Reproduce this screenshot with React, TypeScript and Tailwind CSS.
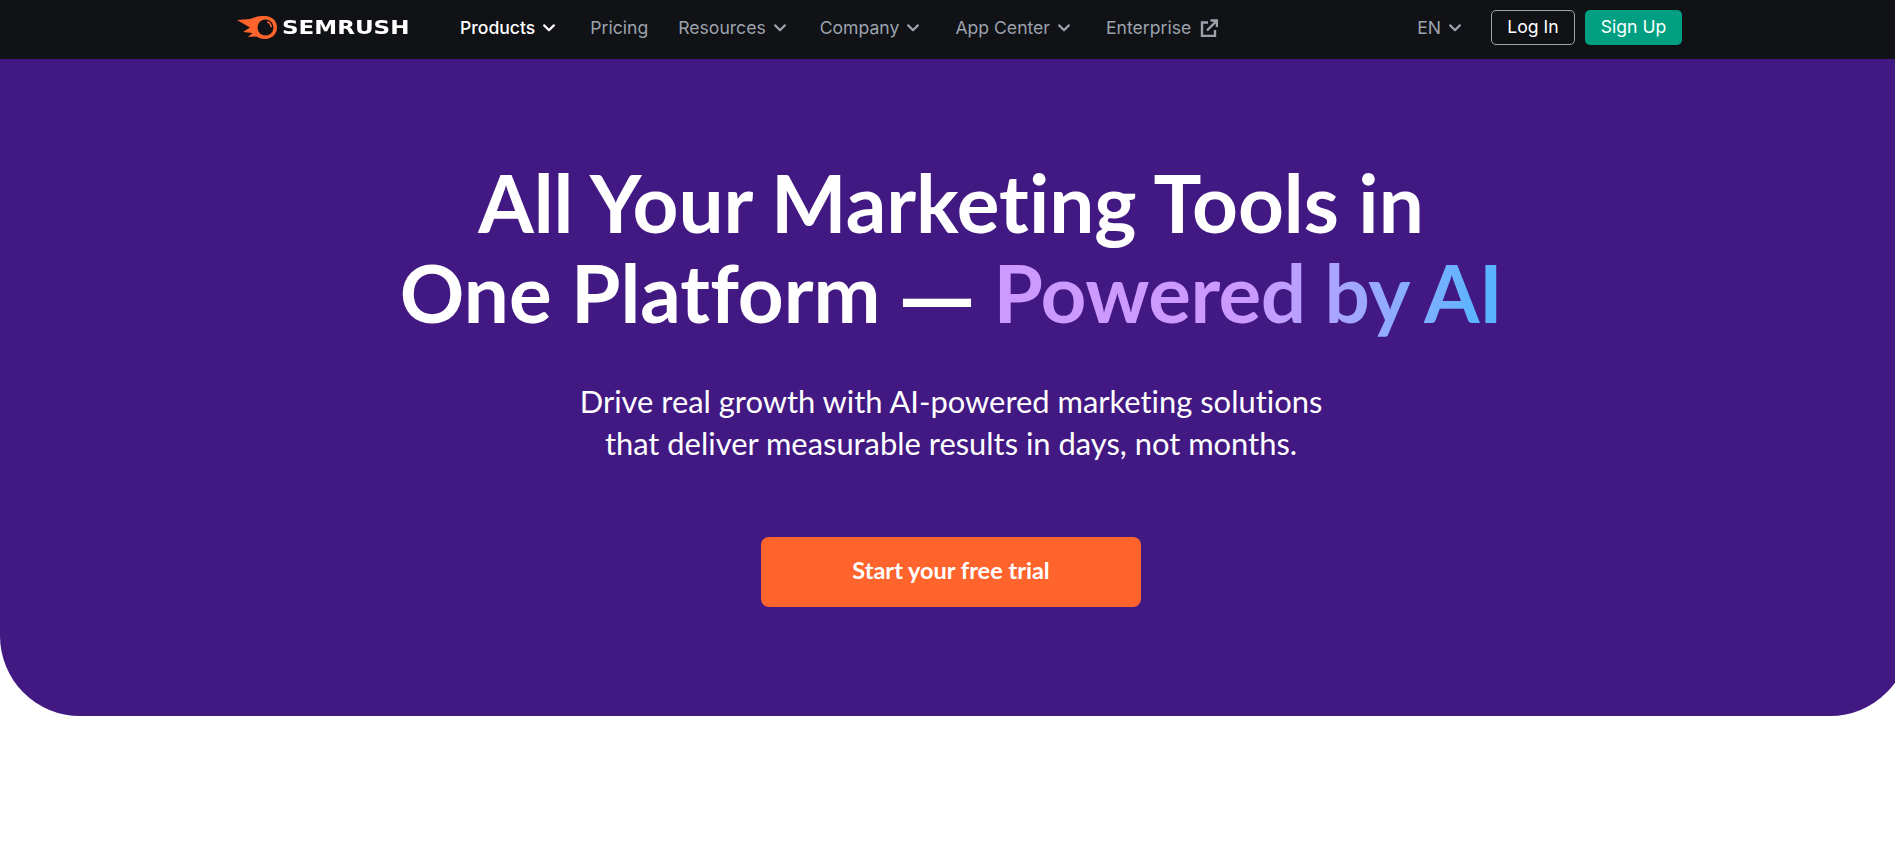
import React from "react";

const Chevron = ({ className = "" }: { className?: string }) => (
  <svg width="12" height="8" viewBox="0 0 12 8" fill="none" className={className}>
    <path d="M1.2 1.4 6 6.2l4.8-4.8" stroke="currentColor" strokeWidth="2.2" strokeLinecap="round" strokeLinejoin="round" />
  </svg>
);

const External = () => (
  <svg width="18" height="18" viewBox="0 0 18 18" fill="none" className="ml-[9px]">
    <path d="M8 3.5H2v13.5h13v-6" stroke="currentColor" strokeWidth="2.4" />
    <path d="M7 11.5 16 2.5M10.5 1.5h6.5v6.5" stroke="currentColor" strokeWidth="2.4" />
  </svg>
);

const Flame = () => (
  <svg width="40" height="23" viewBox="0 0 40 23" className="shrink-0">
    <path
      d="M0 4 L13 3 C17 1 22 0 28 0 C35 0 40 5 40 11.5 C40 18 35 23 28 23 C24.5 23 21.5 21.8 19.5 20.5 L11 21 L15.5 17 L6 16 L13 11.5 Z"
      fill="#ff642d"
    />
    <circle cx="28.5" cy="11.5" r="8" fill="#101216" />
    <path d="M31 6 a6 6 0 0 1 3.2 4.4" stroke="#ff642d" strokeWidth="1.7" fill="none" strokeLinecap="round" />
  </svg>
);

const Item = ({ label, active, ml }: { label: string; active?: boolean; ml: string }) => (
  <div className={`flex items-center ${ml} ${active ? "text-white font-medium" : "text-[#9ca3ad]"}`}>
    <span>{label}</span>
    <Chevron className="ml-[8px]" />
  </div>
);

export default function App() {
  return (
    <div className="min-h-[861px] overflow-hidden bg-white font-['Lato',sans-serif] [font-variant-ligatures:none]">
      <header className="flex h-[59px] items-center bg-[#101216] pb-[4px] pl-[237px] font-['Inter',sans-serif] text-[17.6px]">
        <div className="flex w-[171px] items-center gap-[5px]">
          <Flame />
          <span className="origin-left scale-x-[1.18] font-['DejaVu_Sans',sans-serif] text-[19.5px] leading-none font-bold text-white">
            SEMRUSH
          </span>
        </div>
        <nav className="ml-[52px] flex items-center pt-[2px]">
          <Item label="Products" active ml="" />
          <span className="ml-[35px] text-[#9ca3ad]">Pricing</span>
          <Item label="Resources" ml="ml-[30px]" />
          <Item label="Company" ml="ml-[34px]" />
          <Item label="App Center" ml="ml-[36px]" />
          <div className="ml-[36px] flex items-center text-[#9ca3ad]">
            <span>Enterprise</span>
            <External />
          </div>
        </nav>
        <Item label="EN" ml="ml-[199px] pt-[2px]" />
        <button className="ml-[30px] h-[35px] w-[84px] rounded-[5px] border border-[#a0a4ab] text-white">Log In</button>
        <button className="ml-[10px] h-[35px] w-[97px] rounded-[5px] bg-[#009f81] text-white">Sign Up</button>
      </header>
      <section className="flex h-[657px] w-[1910px] flex-col items-center rounded-b-[80px] bg-[#421983] pr-[8px] pt-[98px] text-white">
        <h1 className="text-center text-[80px] leading-[90px] font-bold">
          All Your Marketing Tools in
          <br />
          One Platform <span className="font-['Open_Sans',sans-serif] text-[74px] leading-[0]">—</span>{" "}
          <span className="bg-gradient-to-r from-[#cc99ff] from-50% to-[#5ab4ff] to-95% bg-clip-text tracking-[-0.55px] text-transparent">Powered by AI</span>
        </h1>
        <p className="mt-[44px] text-center text-[30.9px] leading-[42px]">
          Drive real growth with AI-powered marketing solutions
          <br />
          that deliver measurable results in days, not months.
        </p>
        <button className="mt-[72px] h-[70px] w-[380px] rounded-[8px] bg-[#ff642d] pb-[3px] text-[23.5px] font-bold text-white">
          Start your free trial
        </button>
      </section>
    </div>
  );
}
